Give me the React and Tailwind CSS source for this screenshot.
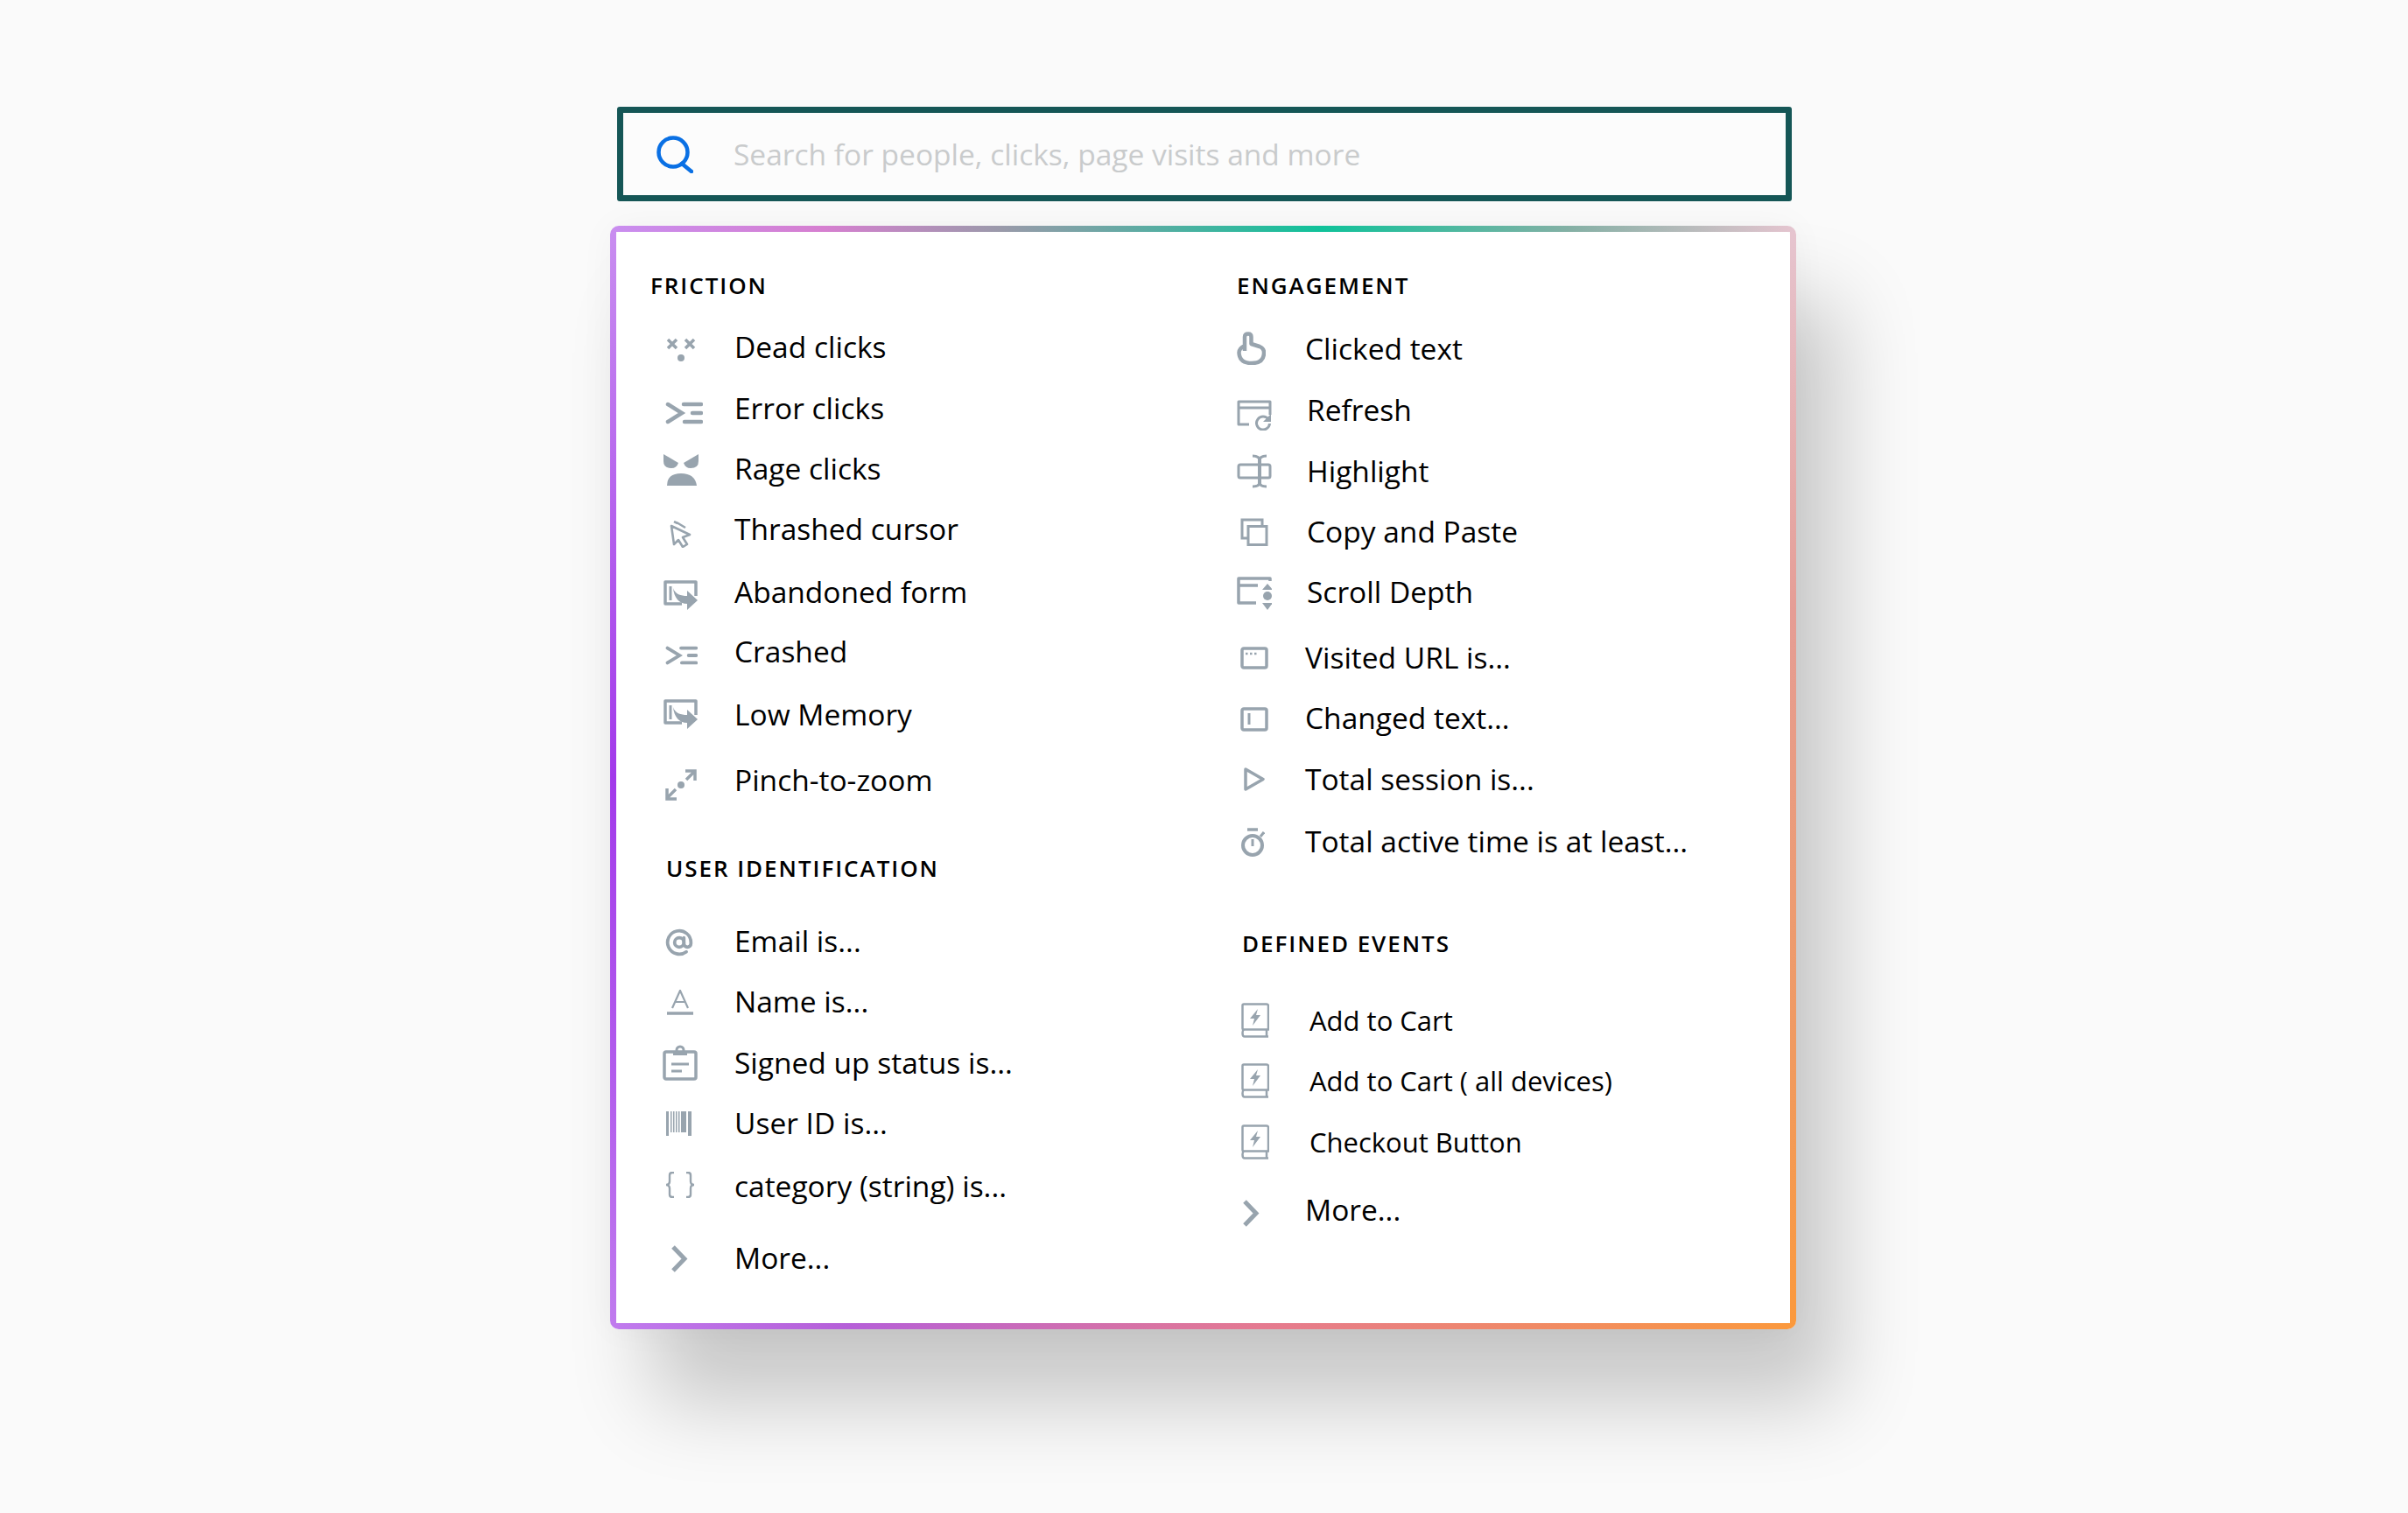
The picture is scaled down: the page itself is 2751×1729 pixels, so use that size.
import { AtSign } from "lucide-react";

const GRAY = "#98a4ae";

const SearchIcon = () => (
    <svg width="42" height="44" viewBox="0 0 42 44" fill="none" stroke="#0a70e4" strokeWidth="4.5" strokeLinecap="round">
        <circle cx="19" cy="20" r="16.5" />
        <path d="M29 33L40 42" />
    </svg>
);

const DeadIcon = () => (
    <svg width="33" height="27" viewBox="0 0 33 27" className="ml-[19px] mt-[3px]" stroke={GRAY} strokeWidth="3.5" fill="none">
        <path d="M1 2L11 12M11 2L1 12M21 2L31 12M31 2L21 12" />
        <circle cx="16" cy="23" r="4" fill={GRAY} stroke="none" />
    </svg>
);

const PromptIcon = ({ w, h, className }) => (
    <svg width={w} height={h} viewBox="0 0 43 26" preserveAspectRatio="none" className={className} stroke={GRAY} strokeWidth="4.5" fill="none" strokeLinecap="round">
        <path d="M3 3L19 13L3 23" />
        <path d="M21 3H41M31 13H41M22 23H41" />
    </svg>
);

const RageIcon = () => (
    <svg width="40" height="36" viewBox="0 0 40 36" className="ml-[15px]" fill={GRAY}>
        <path d="M0 0L17 10Q15 16 9 16Q0 16 0 8Z" />
        <path d="M40 0L23 10Q25 16 31 16Q40 16 40 8Z" />
        <path d="M4 36Q4 22 20 22Q36 22 38 36Z" />
    </svg>
);

const ThrashedIcon = () => (
    <svg width="25" height="31" viewBox="0 0 25 31" className="ml-[22px] mt-[8px]" fill="none" stroke={GRAY} strokeWidth="2.6" strokeLinejoin="round">
        <path d="M2 6L23 16L15 19L20 27L15 30L10 22L5 27Z" />
        <path d="M8 2L18 8M5 1L9 3" />
    </svg>
);

const FormIcon = ({ className }) => (
    <svg width="40" height="34" viewBox="0 0 40 34" className={className} fill="none" stroke={GRAY} strokeWidth="3.5">
        <path d="M21 27H2V2H37V18" strokeLinejoin="round" />
        <path d="M8 7V23" strokeWidth="3" />
        <path d="M11 9C13 16 20 18 27 18V12L39 23L27 34V27C18 27 12 20 11 9Z" fill={GRAY} stroke="none" />
    </svg>
);

const PinchIcon = () => (
    <svg width="36" height="37" viewBox="0 0 36 37" className="ml-[17px] mt-[6px]" fill="none" stroke={GRAY} strokeWidth="3.5">
        <path d="M24 13L33 4M23 3H34V14M12 24L3 33M2 23V35H13" />
        <circle cx="18" cy="19" r="4" fill={GRAY} stroke="none" />
    </svg>
);

const NameIcon = () => (
    <svg width="30" height="29" viewBox="0 0 30 29" className="ml-[19px] mb-[2px]" fill="none" stroke={GRAY} strokeWidth="2.2">
        <path d="M6 21L15 1L24 21M9 14H21" />
        <path d="M0 27H30" strokeWidth="3.5" />
    </svg>
);

const ClipboardIcon = () => (
    <svg width="40" height="41" viewBox="0 0 40 41" className="ml-[14px] mb-[4px]" fill="none" stroke={GRAY} strokeWidth="3.5">
        <rect x="2" y="8" width="36" height="31" rx="2" />
        <circle cx="20" cy="6" r="4" strokeWidth="3" />
        <path d="M12 10H28" strokeWidth="4" />
        <path d="M10 22H30M10 30H22" strokeWidth="3" />
    </svg>
);

const BarcodeIcon = () => (
    <svg width="30" height="28" viewBox="0 0 30 28" className="ml-[18px] mb-[2px]" fill={GRAY}>
        <rect x="0" y="0" width="3" height="28" />
        <rect x="5" y="0" width="1.5" height="24" />
        <rect x="8" y="0" width="1.5" height="24" />
        <rect x="11" y="0" width="1.5" height="24" />
        <rect x="14" y="0" width="1.5" height="24" />
        <rect x="17" y="0" width="6" height="24" />
        <rect x="25" y="0" width="4" height="28" />
    </svg>
);

const BracesIcon = () => (
    <svg width="34" height="30" viewBox="0 0 34 30" className="ml-[17px] mb-[6px]" fill="none" stroke={GRAY} strokeWidth="2.4">
        <path d="M10 1H8Q5 1 5 4V11Q5 15 1 15Q5 15 5 19V26Q5 29 8 29H10" />
        <path d="M24 1H26Q29 1 29 4V11Q29 15 33 15Q29 15 29 19V26Q29 29 26 29H24" />
    </svg>
);

const ChevronIcon = ({ className }) => (
    <svg width="20" height="31" viewBox="0 0 20 31" className={className} fill="none" stroke={GRAY} strokeWidth="5">
        <path d="M3 2L16 15.5L3 29" />
    </svg>
);

const HandIcon = () => (
    <svg width="33" height="38" viewBox="0 0 33 38" className="mb-[4px]" fill="none" stroke={GRAY} strokeWidth="4.5" strokeLinejoin="round">
        <path d="M9 22V6Q9 2.5 13 2.5Q16.5 2.5 16.5 6V14L26 17Q31 19 31 24Q31 36 17 36Q3 36 2.5 24Q2.5 19 9 16" />
    </svg>
);

const RefreshIcon = () => (
    <svg width="40" height="35" viewBox="0 0 40 35" className="mt-[8px]" fill="none" stroke={GRAY} strokeWidth="3">
        <path d="M14 28H2V2H38V17M2 9H38" strokeLinejoin="round" />
        <path d="M36 22A7.5 7.5 0 1 0 37.5 27" />
        <path d="M39 16V25H30Z" fill={GRAY} stroke="none" />
    </svg>
);

const HighlightIcon = () => (
    <svg width="40" height="39" viewBox="0 0 40 39" className="mb-[4px]" fill="none" stroke={GRAY} strokeWidth="3">
        <rect x="2" y="12" width="36" height="15" rx="2" />
        <path d="M26 5V34" strokeWidth="4" />
        <path d="M18 2Q26 2 26 7Q26 2 34 2M18 37Q26 37 26 32Q26 37 34 37" />
    </svg>
);

const CopyIcon = () => (
    <svg width="32" height="32" viewBox="0 0 32 32" className="ml-[4px] mb-[2px]" fill="none" stroke={GRAY} strokeWidth="3">
        <path d="M8 23H2V2H25V9" />
        <rect x="9" y="9.5" width="21" height="21" />
    </svg>
);

const ScrollIcon = () => (
    <svg width="40" height="38" viewBox="0 0 40 38" fill="none" stroke={GRAY} strokeWidth="3.5">
        <path d="M22 30H2V2H38V5M2 10H24" strokeLinejoin="round" />
        <path d="M29 15L35 8L41 15Z" fill={GRAY} stroke="none" />
        <circle cx="35" cy="22" r="5" fill={GRAY} stroke="none" />
        <path d="M29 30H41L35 38Z" fill={GRAY} stroke="none" />
    </svg>
);

const WindowIcon = () => (
    <svg width="32" height="26" viewBox="0 0 32 26" className="ml-[4px] mb-[2px]" fill="none" stroke={GRAY} strokeWidth="3.5">
        <rect x="2" y="2" width="28" height="22" rx="2" />
        <path d="M6 8H20" strokeWidth="2.5" strokeDasharray="2.5 2.5" />
    </svg>
);

const TextBoxIcon = () => (
    <svg width="32" height="28" viewBox="0 0 32 28" className="ml-[4px]" fill="none" stroke={GRAY} strokeWidth="3.5">
        <rect x="2" y="2" width="28" height="24" rx="2" />
        <path d="M10 7V20" strokeWidth="3" />
    </svg>
);

const PlayIcon = () => (
    <svg width="24" height="27" viewBox="0 0 24 27" className="ml-[8px] mb-[4px]" fill="none" stroke={GRAY} strokeWidth="3.5" strokeLinejoin="round">
        <path d="M2 2L22 13.5L2 25Z" />
    </svg>
);

const TimerIcon = () => (
    <svg width="28" height="33" viewBox="0 0 28 33" className="ml-[4px] mb-[2px]" fill="none" stroke={GRAY} strokeWidth="4">
        <circle cx="14" cy="20" r="11" />
        <path d="M8 2H20" strokeWidth="3.5" />
        <path d="M14 13V21" strokeWidth="3" />
        <path d="M23 10L27 5" strokeWidth="3" />
    </svg>
);

const BookIcon = () => (
    <svg width="32" height="40" viewBox="0 0 32 40" className="ml-[5px] mb-[2px]" fill="none" stroke={GRAY} strokeWidth="2.5">
        <path d="M3 1.5H29Q31 1.5 31 3.5V30.5H3Q1.5 30.5 1.5 29V3Q1.5 1.5 3 1.5Z" />
        <path d="M3 30.5Q1.5 31.5 1.5 34.5Q1.5 38.5 4 38.5H31M29 31V38" />
        <path d="M19 7L10 18H15L13 26L22 14H17Z" fill={GRAY} stroke="none" />
    </svg>
);

const Heading = ({ children, className }) => (
    <h3 className={`h-[30px] pb-[3px] flex items-center text-[26px] font-semibold tracking-[0.075em] text-black ${className}`}>{children}</h3>
);

const Row = ({ icon, label, className, slot = "w-[96px]", text = "text-[33.5px] pb-[3px]" }) => (
    <div className={`h-[40px] flex items-center ${className}`}>
        <div className={`${slot} flex-none flex items-center`}>{icon}</div>
        <span className={`text-black whitespace-nowrap ${text}`}>{label}</span>
    </div>
);

const friction = [
    { icon: <DeadIcon />, label: "Dead clicks", className: "mt-[35px]" },
    { icon: <PromptIcon w={43} h={26} className="ml-[17px] mt-[7px]" />, label: "Error clicks", className: "mt-[30px]" },
    { icon: <RageIcon />, label: "Rage clicks", className: "mt-[29px]" },
    { icon: <ThrashedIcon />, label: "Thrashed cursor", className: "mt-[29px]" },
    { icon: <FormIcon className="ml-[15px] mt-[3px]" />, label: "Abandoned form", className: "mt-[32px]" },
    { icon: <PromptIcon w={37} h={22} className="ml-[17px] mt-[6px]" />, label: "Crashed", className: "mt-[28px]" },
    { icon: <FormIcon className="ml-[15px] mb-[4px]" />, label: "Low Memory", className: "mt-[32px]" },
    { icon: <PinchIcon />, label: "Pinch-to-zoom", className: "mt-[35px]" },
];

const identification = [
    { icon: <AtSign size={32} color={GRAY} strokeWidth={2.8} className="ml-[17px]" />, label: "Email is...", className: "mt-[48px]" },
    { icon: <NameIcon />, label: "Name is...", className: "mt-[29px]" },
    { icon: <ClipboardIcon />, label: "Signed up status is...", className: "mt-[30px]" },
    { icon: <BarcodeIcon />, label: "User ID is...", className: "mt-[29px]" },
    { icon: <BracesIcon />, label: "category (string) is...", className: "mt-[32px]" },
    { icon: <ChevronIcon className="ml-[23px] mb-[2px]" />, label: "More...", className: "mt-[42px]" },
];

const engagement = [
    { icon: <HandIcon />, label: "Clicked text", className: "mt-[37px]" },
    { icon: <RefreshIcon />, label: "Refresh", className: "mt-[30px]", slot: "w-[80px]" },
    { icon: <HighlightIcon />, label: "Highlight", className: "mt-[30px]", slot: "w-[80px]" },
    { icon: <CopyIcon />, label: "Copy and Paste", className: "mt-[29px]", slot: "w-[80px]" },
    { icon: <ScrollIcon />, label: "Scroll Depth", className: "mt-[29px]", slot: "w-[80px]" },
    { icon: <WindowIcon />, label: "Visited URL is...", className: "mt-[35px]" },
    { icon: <TextBoxIcon />, label: "Changed text...", className: "mt-[29px]" },
    { icon: <PlayIcon />, label: "Total session is...", className: "mt-[30px]" },
    { icon: <TimerIcon />, label: "Total active time is at least...", className: "mt-[31px]" },
];

const events = [
    { icon: <BookIcon />, label: "Add to Cart", className: "mt-[52px]", slot: "w-[83px]", text: "text-[31px] pb-[1px]" },
    { icon: <BookIcon />, label: "Add to Cart ( all devices)", className: "mt-[29px]", slot: "w-[83px]", text: "text-[31px] pb-[1px]" },
    { icon: <BookIcon />, label: "Checkout Button", className: "mt-[30px]", slot: "w-[83px]", text: "text-[31px] pb-[1px]" },
    { icon: <ChevronIcon className="ml-[6px] mt-[4px]" />, label: "More...", className: "mt-[38px]" },
];

const App = () => {
    return (
        <div className="min-h-screen bg-[#fafafa] overflow-hidden pt-[122px] pl-[697px] [font-family:'Open_Sans',sans-serif]">
            <div className="w-[1355px]">
                <div className="ml-[8px] w-[1342px] h-[108px] border-[7px] border-[#155656] rounded-[3px] bg-[#fcfcfc] flex items-center pl-[38px]">
                    <SearchIcon />
                    <input
                        type="text"
                        placeholder="Search for people, clicks, page visits and more"
                        className="ml-[46px] flex-1 bg-transparent outline-none text-[33.5px] placeholder:text-[#c9cbcc]"
                    />
                </div>
                <div className="mt-[28px] rounded-[10px] p-[7px] shadow-[48px_85px_95px_rgba(0,0,0,0.2),0_0_40px_rgba(0,0,0,0.04)] [background:linear-gradient(90deg,#c98ef0_0%,#d67fd0_18%,#9a9aaa_33%,#10c29a_60%,#85b0a5_81%,#e6c5d0_100%)_top/100%_7px_no-repeat,linear-gradient(90deg,#c07bee_0%,#b55fd8_20%,#e57a90_55%,#fb993c_100%)_bottom/100%_7px_no-repeat,linear-gradient(180deg,#c98ef0_0%,#a239ea_50%,#c07bee_100%)_left/7px_100%_no-repeat,linear-gradient(180deg,#e6c5d0_0%,#e59d95_35%,#f09a60_75%,#fb993c_100%)_right/7px_100%_no-repeat]">
                    <div className="bg-white rounded-[4px] pt-[48px] pb-[53px] pl-[39px] flex">
                        <div className="w-[670px] flex-none">
                            <Heading>FRICTION</Heading>
                            {friction.map((item) => <Row key={item.label} {...item} />)}
                            <Heading className="ml-[18px] mt-[66px]">USER IDENTIFICATION</Heading>
                            {identification.map((item) => <Row key={item.label} {...item} />)}
                        </div>
                        <div className="flex-1">
                            <Heading>ENGAGEMENT</Heading>
                            {engagement.map((item) => <Row key={item.label} slot="w-[78px]" {...item} />)}
                            <Heading className="ml-[6px] mt-[82px]">DEFINED EVENTS</Heading>
                            {events.map((item) => <Row key={item.label} slot="w-[78px]" {...item} />)}
                        </div>
                    </div>
                </div>
            </div>
        </div>
    )
}

export default App
